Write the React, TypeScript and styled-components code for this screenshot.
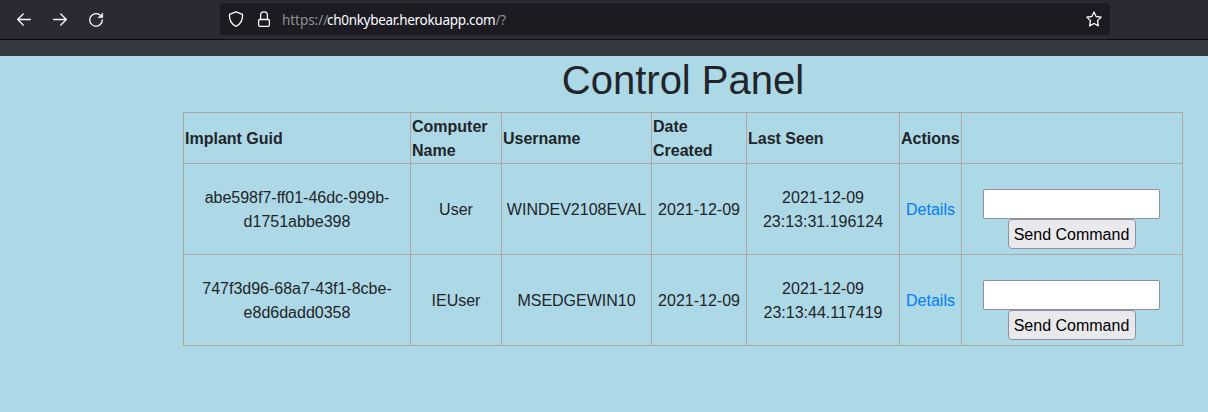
import React from "react";
import styled, { createGlobalStyle } from "styled-components";

const GlobalStyle = createGlobalStyle`
  *, *::before, *::after { box-sizing: border-box; }
  body {
    margin: 0;
    background: #add8e6;
    color: #212529;
    font: 400 16px/24px "Liberation Sans", Arial, sans-serif;
  }
`;

const Page = styled.div`
  min-height: 412px;
  background: #add8e6;
  overflow: hidden;
`;

const Toolbar = styled.header`
  display: flex;
  align-items: center;
  height: 40px;
  padding: 0 98px 1px 16px;
  background: #2b2a33;
  border-bottom: 1px solid #0c0c0d;
`;

const NavButtons = styled.nav`
  display: flex;
  gap: 20px;
  width: 204px;
`;

const Icon = styled.svg`
  display: block;
  flex: none;
  width: 16px;
  height: 16px;
  overflow: visible;
  fill: none;
  stroke: #fbfbfe;
  stroke-width: 1.3;
  stroke-linecap: round;
  stroke-linejoin: round;
`;

const AddressBar = styled.div`
  display: flex;
  align-items: center;
  flex: 1;
  height: 32px;
  padding: 0 8px;
  background: #1c1b22;
  border-radius: 4px;
`;

const SiteIcons = styled.div`
  display: flex;
  gap: 12px;
  width: 54px;
`;

const Url = styled.div`
  display: flex;
  flex: 1;
  padding-top: 1px;
  color: #8f8f98;
  font: 400 13.5px/20px "Noto Sans", "Open Sans", sans-serif;
  white-space: pre;
`;

const UrlPart = styled.span<{ $width: number; $spacing: number; $host?: boolean }>`
  width: ${(p) => p.$width}px;
  letter-spacing: ${(p) => p.$spacing}px;
  color: ${(p) => (p.$host ? "#fbfbfe" : "inherit")};
`;

const NavStrip = styled.div`
  height: 16px;
  background: #343a40;
`;

const Main = styled.main`
  width: 1000px;
  margin-left: 183px;
`;

const Title = styled.h1`
  margin: 0 0 8px;
  font-size: 40px;
  font-weight: 500;
  line-height: 48px;
  text-align: center;
`;

const Table = styled.table`
  width: 1000px;
  table-layout: fixed;
  border-collapse: separate;
  border-spacing: 0;
  border: solid #a9a9a9;
  border-width: 0 1px 1px 0;
`;

const Column = styled.col<{ $width: number }>`
  width: ${(p) => p.$width}px;
`;

const HeadCell = styled.th`
  height: 51px;
  padding: 2px 1px 0;
  border: solid #a9a9a9;
  border-width: 1px 0 0 1px;
  text-align: left;
  font-weight: 700;
`;

const Cell = styled.td`
  height: 91px;
  padding: 2px 1px 0;
  border: solid #a9a9a9;
  border-width: 1px 0 0 1px;
  text-align: center;
`;

const CommandCell = styled(Cell)`
  padding: 1px 2px 1px 0;
`;

const DetailsLink = styled.a`
  color: #007bff;
  text-decoration: none;
`;

const CommandForm = styled.form`
  display: grid;
  justify-content: center;
  justify-items: center;
  margin-top: 20px;
`;

const CommandInput = styled.input`
  width: 177px;
  height: 30px;
  margin: 0;
  padding: 1px 2px;
  font: inherit;
  background: #fff;
  border: 1px solid #8f8f9d;
  border-radius: 2px;
`;

const SendButton = styled.button`
  width: 128px;
  height: 30px;
  margin: 0 0 0 1px;
  padding: 2px 0 0;
  color: #000;
  font: inherit;
  white-space: nowrap;
  background: #e9e9ed;
  border: 1px solid #8f8f9d;
  border-radius: 4px;
`;

const columns = [
  { label: "Implant Guid", width: 227 },
  { label: "Computer Name", width: 91 },
  { label: "Username", width: 150 },
  { label: "Date Created", width: 95 },
  { label: "Last Seen", width: 153 },
  { label: "Actions", width: 62 },
  { label: "", width: 221 },
];

const implants = [
  {
    guid: ["abe598f7-ff01-46dc-999b-", "d1751abbe398"],
    computer: "User",
    user: "WINDEV2108EVAL",
    created: "2021-12-09",
    seen: ["2021-12-09", "23:13:31.196124"],
  },
  {
    guid: ["747f3d96-68a7-43f1-8cbe-", "e8d6dadd0358"],
    computer: "IEUser",
    user: "MSEDGEWIN10",
    created: "2021-12-09",
    seen: ["2021-12-09", "23:13:44.117419"],
  },
];

export default function App() {
  return (
    <Page>
      <GlobalStyle />
      <Toolbar>
        <NavButtons>
          <Icon viewBox="0 0 16 16">
            <path d="M14.4 8.5H1.6M7.2 3 1.6 8.5 7.2 14" />
          </Icon>
          <Icon viewBox="0 0 16 16">
            <path d="M1.6 8.5h12.8M8.8 3l5.6 5.5L8.8 14" />
          </Icon>
          <Icon viewBox="0 0 16 16">
            <path d="M11.7 3.8A6.3 6.3 0 1 0 14.3 8.9" />
            <path d="M14.7 2.3v4.3h-4.3z" fill="#fbfbfe" strokeWidth="0.6" />
          </Icon>
        </NavButtons>
        <AddressBar>
          <SiteIcons>
            <Icon viewBox="0 0 16 16">
              <path d="M8 .9 14.5 3.3c.4 4.8-1.1 9.5-6.5 12C2.6 12.8 1.1 8.1 1.5 3.3z" />
            </Icon>
            <Icon viewBox="0 0 16 16">
              <rect x="2.6" y="8.5" width="10.8" height="6.9" rx="1.4" />
              <path d="M4.6 8.4V4.3a3.4 3.4 0 0 1 6.8 0v4.1" />
            </Icon>
          </SiteIcons>
          <Url>
            <UrlPart $width={45} $spacing={-0.05}>https://</UrlPart>
            <UrlPart $width={168.5} $spacing={-0.3} $host>ch0nkybear.herokuapp.com</UrlPart>
            <UrlPart $width={14} $spacing={-0.3}>/?</UrlPart>
          </Url>
          <Icon viewBox="0 0 16 16">
            <path d="m8 .9 2.1 4.6 5.1.6-3.7 3.5.9 5.3L8 12.5l-4.4 2.4.9-5.3L.8 6.1l5.1-.6z" />
          </Icon>
        </AddressBar>
      </Toolbar>
      <NavStrip />
      <Main>
        <Title>Control Panel</Title>
        <Table>
          <colgroup>
            {columns.map((c, i) => (
              <Column key={i} $width={c.width} />
            ))}
          </colgroup>
          <thead>
            <tr>
              {columns.map((c, i) => (
                <HeadCell key={i}>{c.label}</HeadCell>
              ))}
            </tr>
          </thead>
          <tbody>
            {implants.map((m) => (
              <tr key={m.user}>
                <Cell>{m.guid[0]}<br />{m.guid[1]}</Cell>
                <Cell>{m.computer}</Cell>
                <Cell>{m.user}</Cell>
                <Cell>{m.created}</Cell>
                <Cell>{m.seen[0]}<br />{m.seen[1]}</Cell>
                <Cell><DetailsLink href="#details">Details</DetailsLink></Cell>
                <CommandCell>
                  <CommandForm>
                    <CommandInput type="text" />
                    <SendButton type="button">Send Command</SendButton>
                  </CommandForm>
                </CommandCell>
              </tr>
            ))}
          </tbody>
        </Table>
      </Main>
    </Page>
  );
}
